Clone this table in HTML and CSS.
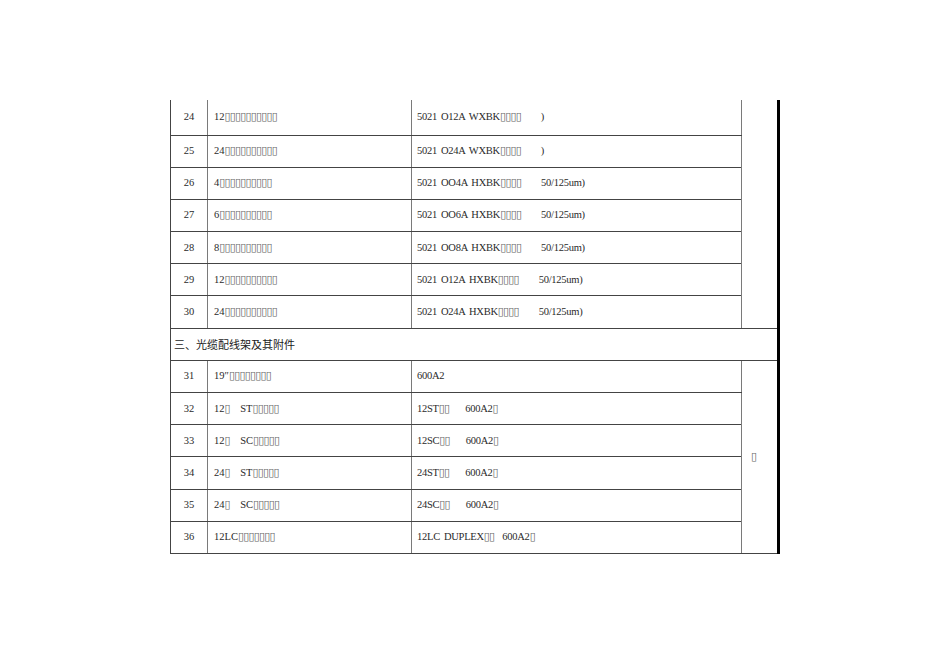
FILE: index.html
```html
<!DOCTYPE html>
<html lang="zh">
<head>
<meta charset="utf-8">
<title>光缆配线架</title>
<link rel="stylesheet" href="styles.css">
</head>
<body>
<table class="sheet">
  <colgroup>
    <col class="c-no"><col class="c-name"><col class="c-model"><col class="c-note">
  </colgroup>
  <tbody>
    <tr class="first"><td class="no">24</td><td class="name">12<span class="tf">▯▯▯▯▯▯▯▯▯▯</span></td><td class="model">5021 O12A WXBK<span class="tf">▯▯▯▯</span>     )</td><td class="note" rowspan="7"></td></tr>
    <tr><td class="no">25</td><td class="name">24<span class="tf">▯▯▯▯▯▯▯▯▯▯</span></td><td class="model">5021 O24A WXBK<span class="tf">▯▯▯▯</span>     )</td></tr>
    <tr><td class="no">26</td><td class="name">4<span class="tf">▯▯▯▯▯▯▯▯▯▯</span></td><td class="model">5021 OO4A HXBK<span class="tf">▯▯▯▯</span>     50/125um)</td></tr>
    <tr><td class="no">27</td><td class="name">6<span class="tf">▯▯▯▯▯▯▯▯▯▯</span></td><td class="model">5021 OO6A HXBK<span class="tf">▯▯▯▯</span>     50/125um)</td></tr>
    <tr><td class="no">28</td><td class="name">8<span class="tf">▯▯▯▯▯▯▯▯▯▯</span></td><td class="model">5021 OO8A HXBK<span class="tf">▯▯▯▯</span>     50/125um)</td></tr>
    <tr><td class="no">29</td><td class="name">12<span class="tf">▯▯▯▯▯▯▯▯▯▯</span></td><td class="model">5021 O12A HXBK<span class="tf">▯▯▯▯</span>     50/125um)</td></tr>
    <tr><td class="no">30</td><td class="name">24<span class="tf">▯▯▯▯▯▯▯▯▯▯</span></td><td class="model">5021 O24A HXBK<span class="tf">▯▯▯▯</span>     50/125um)</td></tr>
    <tr class="section"><td class="heading" colspan="4">三、光缆配线架及其附件</td></tr>
    <tr><td class="no">31</td><td class="name">19″<span class="tf">▯▯▯▯▯▯▯▯</span></td><td class="model">600A2</td><td class="note" rowspan="6"><span class="tf">▯</span></td></tr>
    <tr><td class="no">32</td><td class="name">12<span class="tf">▯</span>  ST<span class="tf">▯▯▯▯▯</span></td><td class="model">12ST<span class="tf">▯▯</span>    600A2<span class="tf">▯</span></td></tr>
    <tr><td class="no">33</td><td class="name">12<span class="tf">▯</span>  SC<span class="tf">▯▯▯▯▯</span></td><td class="model">12SC<span class="tf">▯▯</span>    600A2<span class="tf">▯</span></td></tr>
    <tr><td class="no">34</td><td class="name">24<span class="tf">▯</span>  ST<span class="tf">▯▯▯▯▯</span></td><td class="model">24ST<span class="tf">▯▯</span>    600A2<span class="tf">▯</span></td></tr>
    <tr><td class="no">35</td><td class="name">24<span class="tf">▯</span>  SC<span class="tf">▯▯▯▯▯</span></td><td class="model">24SC<span class="tf">▯▯</span>    600A2<span class="tf">▯</span></td></tr>
    <tr class="last"><td class="no">36</td><td class="name">12LC<span class="tf">▯▯▯▯▯▯▯</span></td><td class="model">12LC DUPLEX<span class="tf">▯▯</span>  600A2<span class="tf">▯</span></td></tr>
  </tbody>
</table>
</body>
</html>
```
FILE: styles.css
```css
html, body {
  margin: 0;
  padding: 0;
  background: #ffffff;
}

body {
  padding: 100px 0 0 170px;
  font-family: "Liberation Serif", serif;
  font-size: 10.5px;
  color: #2a2a2a;
}

.sheet {
  border-collapse: collapse;
  table-layout: fixed;
  width: 608px;
}

.c-no { width: 37px; }
.c-name { width: 204px; }
.c-model { width: 330px; }
.c-note { width: 37px; }

.sheet td {
  height: 31.2px;
  padding: 0 5px;
  border-top: 1px solid #444;
  border-bottom: 1px solid #444;
  border-left: 1px solid #7a7a7a;
  border-right: 1px solid #7a7a7a;
  white-space: pre;
  word-spacing: 2.6px;
  vertical-align: middle;
  line-height: 12px;
}

.sheet tr.first td {
  border-top: none;
  height: 34.5px;
}

.sheet td.no {
  border-left-color: #444;
  text-align: center;
  padding: 0;
}

.sheet td.name {
  padding-left: 6px;
}

.sheet td.model {
  padding-left: 5px;
  letter-spacing: -0.25px;
  word-spacing: 1.6px;
}

.sheet td.note {
  border-right: 3px solid #000;
  text-align: left;
  padding-left: 9px;
}

.sheet td.heading {
  border-left-color: #444;
  border-right: 3px solid #000;
  padding-left: 3px;
  font-family: "Noto Sans CJK SC", "Noto Sans", sans-serif;
  font-size: 11px;
  color: #1a1a1a;
  word-spacing: 0;
}

.tf {
  font-family: "DejaVu Sans", sans-serif;
  font-size: 11px;
  letter-spacing: -0.8px;
  color: #666;
  word-spacing: 0;
}
```
